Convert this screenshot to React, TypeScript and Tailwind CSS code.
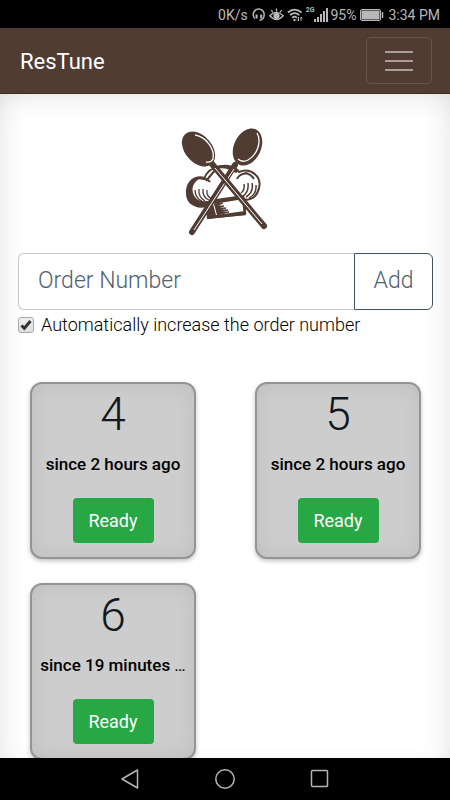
import { useState } from "react";

const orders = [
  { number: 4, since: "since 2 hours ago" },
  { number: 5, since: "since 2 hours ago" },
  { number: 6, since: "since 19 minutes", more: true },
];

function StatusBar() {
  return (
    <div className="flex h-7 shrink-0 items-center justify-end bg-black pt-[1px] pr-[10px] text-sm text-[#b8b8b8]">
      <span>0K/s</span>
      <svg className="ml-1 h-[14px] w-[14px]" viewBox="0 0 14 14" fill="none" stroke="currentColor" strokeWidth="1.500">
        <path d="M3 10.500C1.500 9.500 1.200 8.200 1.200 6.500a5.500 5.500 0 0 1 11 0c0 2.500-.4 5.300-4.700 5.700" />
        <path d="M4.600 6.500v4M9.200 6.500v4" strokeWidth="2" />
      </svg>
      <svg className="ml-[3px] h-[14px] w-[15px]" viewBox="0 0 15 14" fill="none" stroke="currentColor" strokeWidth="1.300">
        <path d="M.8 7.800Q7.500.8 14.200 7.800Q7.500 15.500.8 7.800Z" />
        <path d="M7.500 3.500V.5M4 4.500 2.300 2M11 4.500 12.700 2" />
        <circle cx="7.500" cy="7.800" r="2.500" fill="currentColor" />
      </svg>
      <svg className="ml-[3px] h-[14px] w-[16px]" viewBox="0 0 16 14" fill="none" stroke="currentColor" strokeWidth="1.700">
        <path d="M.8 4.500Q7.500-1.300 14.500 4.500M3 7.200Q7.500 3.200 12.300 7.200M5.200 9.800Q7.500 7.600 10 9.800" />
        <circle cx="7.500" cy="12" r="1.200" fill="currentColor" stroke="none" />
        <path d="M11.500 9v4m-1.500-1.500 1.500 1.500M14 13V9m1.400 1.500L14 9" strokeWidth="1" />
      </svg>
      <span className="ml-[3px] self-start pt-[6px] text-[7px] leading-[7px] font-bold">2G</span>
      <svg className="h-[14px] w-[14px]" viewBox="0 0 14 14" fill="currentColor">
        <path d="M0 11h2v3H0zM3 9h2v5H3zM6 6h2v8H6zM9 3h2v11H9zM12 0h2v14h-2z" />
      </svg>
      <span className="ml-[2px]">95%</span>
      <svg className="ml-1 h-3 w-6" viewBox="0 0 24 12" fill="none" stroke="currentColor">
        <rect x=".5" y=".5" width="20" height="11" rx="1.500" />
        <rect x="1.500" y="1.500" width="18" height="9" fill="currentColor" stroke="none" />
        <path d="M22.500 3v6" strokeWidth="1.500" />
      </svg>
      <span className="ml-1">3:34 PM</span>
    </div>
  );
}

function Logo() {
  return (
    <svg className="mx-auto h-[112px] w-[90px]" viewBox="0 0 90 112" fill="none" stroke="#503c33" role="img" aria-label="ResTune">
      <path d="M24 54C29 39 52 37 59 47C71 42 82 52 79 63C77 73 69 76 64 74L65 89L28 93L26 80C15 83 8 77 8 69C7 57 14 51 24 54Z" fill="#fff" strokeWidth="2" />
      <path d="M25 52C15 54 11 61 13 68C16 77 24 78 36 74L64 70L64 74L33 79L36 90L65 86L66 90L27 94L27 82C15 85 6 78 6 69C5 57 14 49 25 52Z" fill="#503c33" stroke="none" />
      <path d="M34 79l9-1-6 3 7 0-6 2 8 0-7 2 9 0-8 2 9 0-12 3" strokeWidth="1" fill="#503c33" />
      <path d="M63 71 65 89" strokeWidth="2.500" />
      <path d="M23 53q5 1 7 4M67 48q-8 1-10 6M65 48q6 1 9 6" strokeWidth="2" />
      <path d="M15 65q0 8 7 11M19 64q-1 8 6 12M23 64q-1 8 6 11M27 65q-1 6 5 9" strokeWidth="1.300" />
      <path d="M76 60q1 9-7 13M72 58q2 9-6 14M68 58q1 9-5 13M64 59q1 6-3 9" strokeWidth="1.500" />
      <path d="M35 43q10-4 22 4" strokeWidth="3" />
      <path d="M36 44 26 56" strokeWidth="2" />
      <g>
        <path d="M55 40 12 107" strokeWidth="6" strokeLinecap="round" />
        <path d="M54 44 14 105" stroke="#fff" strokeWidth="1" />
        <ellipse cx="67.500" cy="22" rx="13.500" ry="19.500" transform="rotate(25 67.500 22)" fill="#503c33" stroke="none" />
        <path d="M77 8C82 17 77 30 68 35Q62 38 58 34" stroke="#fff" strokeWidth="1.300" />
      </g>
      <g>
        <path d="M32 39 84 101" strokeWidth="6" strokeLinecap="round" />
        <path d="M35 43 82 99" stroke="#fff" strokeWidth="1" />
        <ellipse cx="18.500" cy="24" rx="13.500" ry="20" transform="rotate(-41 18.500 24)" fill="#503c33" stroke="none" />
        <path d="M15 10C27 12 35 25 33 34Q31 38 26 37" stroke="#fff" strokeWidth="1.300" />
      </g>
    </svg>
  );
}

function OrderCard({ number, since, more }: { number: number; since: string; more?: boolean }) {
  return (
    <div className="pr-[29px] pl-[30px]">
      <article className="flex flex-col items-center rounded-xl border-2 border-[#959595] bg-[#cdcdcd] px-1 pt-[1px] pb-[14px] text-[#11181e] shadow-[inset_0_0_20px_#00000014,0_2px_4px_#00000040]">
        <h2 className="text-[46px] leading-[58px] font-light">{number}</h2>
        <p className="mt-[7px] w-full text-center text-[17px] leading-7 text-black">
          <span className="font-medium">{since}</span>
          {more && " …"}
        </p>
        <button type="button" className="mt-5 h-[45px] w-[81px] rounded-[4px] bg-[#28a745] text-lg text-white">
          Ready
        </button>
      </article>
    </div>
  );
}

function SystemNav() {
  return (
    <div className="flex h-[42px] shrink-0 items-center justify-center gap-[73px] bg-black text-[#b5b5b5]">
      <button type="button" aria-label="Back">
        <svg className="h-[22px] w-[22px]" viewBox="0 0 22 22" fill="none" stroke="currentColor" strokeWidth="1.500" strokeLinejoin="round">
          <path d="M18.500 2v18L3 11Z" />
        </svg>
      </button>
      <button type="button" aria-label="Home">
        <svg className="h-[22px] w-[22px]" viewBox="0 0 22 22" fill="none" stroke="currentColor" strokeWidth="1.500">
          <circle cx="11" cy="11" r="9.200" />
        </svg>
      </button>
      <button type="button" aria-label="Recent apps">
        <svg className="h-[22px] w-[22px]" viewBox="0 0 22 22" fill="none" stroke="currentColor" strokeWidth="1.500">
          <rect x="2.500" y="2.500" width="16" height="16" rx="1" />
        </svg>
      </button>
    </div>
  );
}

export default function App() {
  const [auto, setAuto] = useState(true);
  return (
    <div className="flex h-screen flex-col bg-white font-[Roboto,'Open_Sans',sans-serif]">
      <StatusBar />
      <header className="flex shrink-0 items-center justify-between border-b border-[#3f2a20] bg-[#503c33] py-[9px] pr-[18px] pl-5">
        <a href="#" className="pt-[2px] text-[22px] leading-8 text-white">ResTune</a>
        <button type="button" aria-label="Toggle navigation" className="flex h-[47px] w-[66px] flex-col items-center justify-center gap-[7px] rounded-[5px] border border-[#67554c]">
          <span className="h-[2px] w-7 bg-[#a99e99]" />
          <span className="h-[2px] w-7 bg-[#a99e99]" />
          <span className="h-[2px] w-7 bg-[#a99e99]" />
        </button>
      </header>
      <main className="min-h-0 flex-1 overflow-hidden pt-[31px] shadow-[inset_0_20px_32px_-20px_#0000001a,inset_20px_0_32px_-20px_#0000001a,inset_-20px_0_32px_-20px_#0000001a]">
        <Logo />
        <form className="mt-4 pr-[17px] pl-[18px]" onSubmit={(e) => e.preventDefault()}>
          <div className="flex h-[57px]">
            <input
              type="text"
              aria-label="Order Number"
              placeholder="Order Number"
              className="min-w-0 flex-1 rounded-l-[6px] border border-r-0 border-[#c3cbd2] bg-white px-[19px] text-[23px] font-light outline-none placeholder:text-[#52616e]"
            />
            <button type="submit" className="w-[79px] rounded-r-[6px] border border-[#43525f] bg-white text-[23px] font-light text-[#52616e]">
              Add
            </button>
          </div>
          <label className="mt-[1px] flex items-center gap-[7px] text-lg leading-7 font-light text-black">
            <span className="relative h-4 w-4 shrink-0">
              <input
                type="checkbox"
                checked={auto}
                onChange={(e) => setAuto(e.target.checked)}
                className="peer block h-4 w-4 appearance-none rounded-[3px] border border-[#aaa] bg-linear-to-b from-[#eee] to-[#ddd]"
              />
              <svg className="pointer-events-none absolute inset-0 hidden h-4 w-4 peer-checked:block" viewBox="0 0 16 16" fill="none" stroke="#333" strokeWidth="3">
                <path d="M3.500 8.500 6.300 11.300 12.500 4" />
              </svg>
            </span>
            <span>Automatically increase the order number</span>
          </label>
        </form>
        <section className="mt-[43px] grid grid-cols-2 gap-y-6">
          {orders.map((order) => (
            <OrderCard key={order.number} {...order} />
          ))}
        </section>
      </main>
      <SystemNav />
    </div>
  );
}
